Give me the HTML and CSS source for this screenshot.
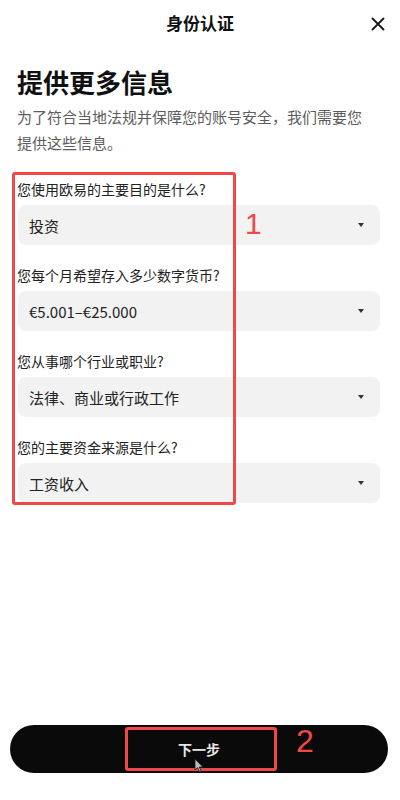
FILE: index.html
```html
<!DOCTYPE html>
<html lang="zh-CN">
<head>
<meta charset="utf-8">
<link rel="stylesheet" href="styles.css">
</head>
<body>
<div class="page">
  <header class="topbar">
    <span></span>
    <h1 class="title">身份认证</h1>
    <span class="close" aria-label="关闭">
      <svg width="14" height="14" viewBox="0 0 14 14"><path d="M1.5 1.5 L12.5 12.5 M12.5 1.5 L1.5 12.5" stroke="#1a1a1a" stroke-width="1.9" stroke-linecap="round" fill="none"/></svg>
    </span>
  </header>

  <main class="content">
    <h2 class="heading">提供更多信息</h2>
    <p class="sub">为了符合当地法规并保障您的账号安全，我们需要您提供这些信息。</p>

    <section class="form">
      <div class="field">
        <div class="label">您使用欧易的主要目的是什么?</div>
        <div class="select"><span>投资</span><i class="caret"></i></div>
      </div>
      <div class="field">
        <div class="label">您每个月希望存入多少数字货币?</div>
        <div class="select"><span>€5.001–€25.000</span><i class="caret"></i></div>
      </div>
      <div class="field">
        <div class="label">您从事哪个行业或职业?</div>
        <div class="select"><span>法律、商业或行政工作</span><i class="caret"></i></div>
      </div>
      <div class="field">
        <div class="label">您的主要资金来源是什么?</div>
        <div class="select"><span>工资收入</span><i class="caret"></i></div>
      </div>
      <div class="mark mark-form"></div>
      <div class="num num-1">1</div>
    </section>
  </main>

  <footer class="footer">
    <div class="btn-wrap">
      <button class="btn">下一步</button>
      <div class="mark mark-btn"></div>
      <div class="num num-2">2</div>
      <svg class="cursor" width="10" height="15" viewBox="0 0 10 15"><path d="M1 1 L1 12 L3.6 9.6 L5.6 14 L7.2 13.3 L5.3 9 L8.8 9 Z" fill="#bdbdbd" stroke="#222" stroke-width="0.9" stroke-linejoin="round"/></svg>
    </div>
  </footer>
</div>
</body>
</html>
```

FILE: styles.css
```css
* { box-sizing: border-box; }
html, body { margin: 0; padding: 0; background: #fff; }
body {
  font-family: "Noto Sans CJK SC", "Liberation Sans", sans-serif;
  color: #1a1a1a;
}
.page {
  width: 400px;
  height: 800px;
  display: flex;
  flex-direction: column;
  overflow: hidden;
}
.topbar {
  height: 46px;
  display: grid;
  grid-template-columns: 1fr auto 1fr;
  align-items: center;
  padding: 0 15px 0 15px;
}
.title {
  margin: 0;
  font-size: 17px;
  font-weight: 700;
  line-height: 24px;
  color: #111;
}
.close {
  justify-self: end;
  display: flex;
  width: 14px;
  height: 14px;
  margin-right: 0;
  margin-top: 1px;
}
.content {
  flex: 1;
  padding: 0 17px 0 17px;
}
.heading {
  margin: 19px 0 0 0;
  font-size: 26px;
  line-height: 34px;
  font-weight: 700;
  color: #111;
}
.sub {
  margin: 5px 0 0 0;
  font-size: 15px;
  line-height: 26px;
  color: #5c5c5c;
  padding-right: 14px;
}
.form {
  position: relative;
  margin-top: 23px;
  display: flex;
  flex-direction: column;
  gap: 20px;
}
.field {
  display: flex;
  flex-direction: column;
  gap: 6px;
}
.label {
  font-size: 14px;
  line-height: 20px;
  color: #222;
}
.select {
  height: 40px;
  margin: 0 3px 0 1px;
  background: #f2f2f2;
  border-radius: 8px;
  display: flex;
  align-items: center;
  justify-content: space-between;
  padding: 0 16px 0 11px;
  font-size: 15px;
  color: #222;
}
.caret {
  width: 0;
  height: 0;
  border-left: 3px solid transparent;
  border-right: 3px solid transparent;
  border-top: 4px solid #333;
}
.mark {
  position: absolute;
  border: 3px solid #f04848;
  border-radius: 3px;
  pointer-events: none;
}
.mark-form {
  left: -5px;
  top: -7px;
  width: 224px;
  height: 333px;
}
.num {
  position: absolute;
  color: #f04848;
  font-family: "Liberation Sans", sans-serif;
  font-weight: 400;
}
.num-1 {
  left: 228px;
  top: 28px;
  font-size: 30px;
  line-height: 34px;
}
.footer {
  padding: 0 12px 27px 10px;
}
.btn-wrap {
  position: relative;
}
.btn {
  display: block;
  width: 100%;
  height: 48px;
  border: 0;
  border-radius: 24px;
  background: #0a0a0a;
  color: #e6e6e6;
  font-family: "Noto Sans CJK SC", sans-serif;
  font-size: 14px;
  font-weight: 700;
  padding: 0;
}
.mark-btn {
  left: 115px;
  top: 2px;
  width: 152px;
  height: 44px;
}
.num-2 {
  left: 286px;
  top: -2px;
  font-size: 32px;
  line-height: 36px;
}
.cursor {
  position: absolute;
  left: 184px;
  top: 33px;
}
```
